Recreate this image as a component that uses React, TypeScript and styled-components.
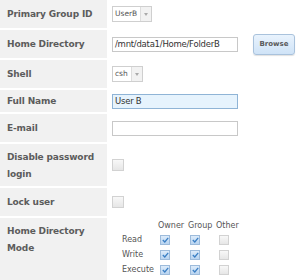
import React from "react";
import styled, { createGlobalStyle } from "styled-components";

const Global = createGlobalStyle`
  html, body { margin: 0; padding: 0; background: #fff; }
  body { font-family: "DejaVu Sans", Verdana, sans-serif; }
`;

const Form = styled.div`
  display: flex;
  flex-direction: column;
  gap: 2px;
  width: 303px;
`;

const Row = styled.div<{ $h: number }>`
  display: flex;
  height: ${(p) => p.$h}px;
  gap: 4px;
`;

const Label = styled.div<{ $top?: boolean }>`
  width: 107px;
  flex: none;
  background: #f1f1f1;
  padding-left: 7px;
  padding-right: 2px;
  color: #5c5c5c;
  font-weight: bold;
  font-size: 9px;
  letter-spacing: -0.15px;
  line-height: 17px;
  display: flex;
  align-items: ${(p) => (p.$top ? "flex-start" : "center")};
  padding-top: ${(p) => (p.$top ? "5px" : "0")};
  box-sizing: border-box;
`;

const Value = styled.div<{ $top?: boolean }>`
  flex: 1;
  display: flex;
  align-items: ${(p) => (p.$top ? "flex-start" : "center")};
  padding-left: 1px;
`;

const SelectBox = styled.div`
  display: flex;
  height: 16px;
  border: 1px solid #cfcfcf;
  box-sizing: border-box;
  background: #fff;
`;

const SelectText = styled.span`
  font-size: 7.5px;
  color: #555;
  padding: 0 3px 0 2px;
  line-height: 14px;
`;

const SelectArrow = styled.span`
  width: 10px;
  border-left: 1px solid #ddd;
  background: #f2f2f2;
  display: flex;
  align-items: center;
  justify-content: center;
  &::after {
    content: "";
    border-left: 2.5px solid transparent;
    border-right: 2.5px solid transparent;
    border-top: 3px solid #aaa;
  }
`;

const TextInput = styled.div<{ $active?: boolean }>`
  width: 126px;
  height: 15px;
  box-sizing: border-box;
  border: 1px solid ${(p) => (p.$active ? "#8fb4d6" : "#c8c8c8")};
  background: ${(p) => (p.$active ? "#e6f3fd" : "#fff")};
  font-size: 8.5px;
  letter-spacing: -0.25px;
  line-height: 13px;
  color: #333;
  padding-left: 2px;
  white-space: nowrap;
  overflow: hidden;
`;

const Browse = styled.div`
  margin-left: 15px;
  width: 42px;
  height: 21px;
  box-sizing: border-box;
  border: 1px solid #a9c2dc;
  border-radius: 3px;
  background: linear-gradient(#e9f3fd, #cfe3f7);
  box-shadow: 0 1px 1px rgba(0, 0, 0, 0.12);
  font-size: 7px;
  font-weight: bold;
  color: #5a5a5a;
  display: flex;
  align-items: center;
  justify-content: center;
`;

const Check = styled.span<{ $on?: boolean; $size?: number }>`
  width: ${(p) => p.$size ?? 12}px;
  height: ${(p) => p.$size ?? 12}px;
  box-sizing: border-box;
  border: 1px solid ${(p) => (p.$on ? "#9dbbdb" : "#d2d2d2")};
  background: ${(p) =>
    p.$on ? "linear-gradient(#dcebfa, #b9d4f0)" : "linear-gradient(#f8f8f8, #e6e6e6)"};
  display: inline-flex;
  align-items: center;
  justify-content: center;
`;

const PermGrid = styled.div`
  display: grid;
  grid-template-columns: 36px 30px 28px 30px;
  grid-template-rows: 14px 15px 15px 15px;
  align-items: center;
  font-size: 8px;
  color: #555;
  margin-left: 10px;
  white-space: nowrap;
`;

const Head = styled.span``;

const PermLabel = styled.span``;

const CellBox = styled.span<{ $pad: number }>`
  padding-left: ${(p) => p.$pad}px;
  display: flex;
  align-items: center;
`;

const Tick = () => (
  <svg width="7" height="6" viewBox="0 0 7 6">
    <path d="M0.8 3 L2.8 5 L6.2 0.8" fill="none" stroke="#3b7fc4" strokeWidth="1.3" />
  </svg>
);

const Box = ({ on, pad = 2 }: { on?: boolean; pad?: number }) => (
  <CellBox $pad={pad}>
    <Check $on={on} $size={10}>{on && <Tick />}</Check>
  </CellBox>
);

export default function App() {
  return (
    <>
      <Global />
      <Form>
        <Row $h={28}>
          <Label>Primary Group ID</Label>
          <Value>
            <SelectBox>
              <SelectText>UserB</SelectText>
              <SelectArrow />
            </SelectBox>
          </Value>
        </Row>
        <Row $h={28}>
          <Label>Home Directory</Label>
          <Value>
            <TextInput>/mnt/data1/Home/FolderB</TextInput>
            <Browse>Browse</Browse>
          </Value>
        </Row>
        <Row $h={28}>
          <Label>Shell</Label>
          <Value>
            <SelectBox>
              <SelectText>csh</SelectText>
              <SelectArrow />
            </SelectBox>
          </Value>
        </Row>
        <Row $h={22}>
          <Label>Full Name</Label>
          <Value>
            <TextInput $active>User B</TextInput>
          </Value>
        </Row>
        <Row $h={28}>
          <Label>E-mail</Label>
          <Value>
            <TextInput />
          </Value>
        </Row>
        <Row $h={42}>
          <Label $top>Disable password login</Label>
          <Value>
            <Check />
          </Value>
        </Row>
        <Row $h={28}>
          <Label>Lock user</Label>
          <Value>
            <Check />
          </Value>
        </Row>
        <Row $h={62}>
          <Label $top>Home Directory Mode</Label>
          <Value $top>
            <PermGrid>
              <span />
              <Head>Owner</Head>
              <Head>Group</Head>
              <Head>Other</Head>
              <PermLabel>Read</PermLabel>
              <Box on />
              <Box on />
              <Box pad={3} />
              <PermLabel>Write</PermLabel>
              <Box on />
              <Box on />
              <Box pad={3} />
              <PermLabel>Execute</PermLabel>
              <Box on />
              <Box on />
              <Box pad={3} />
            </PermGrid>
          </Value>
        </Row>
      </Form>
    </>
  );
}
